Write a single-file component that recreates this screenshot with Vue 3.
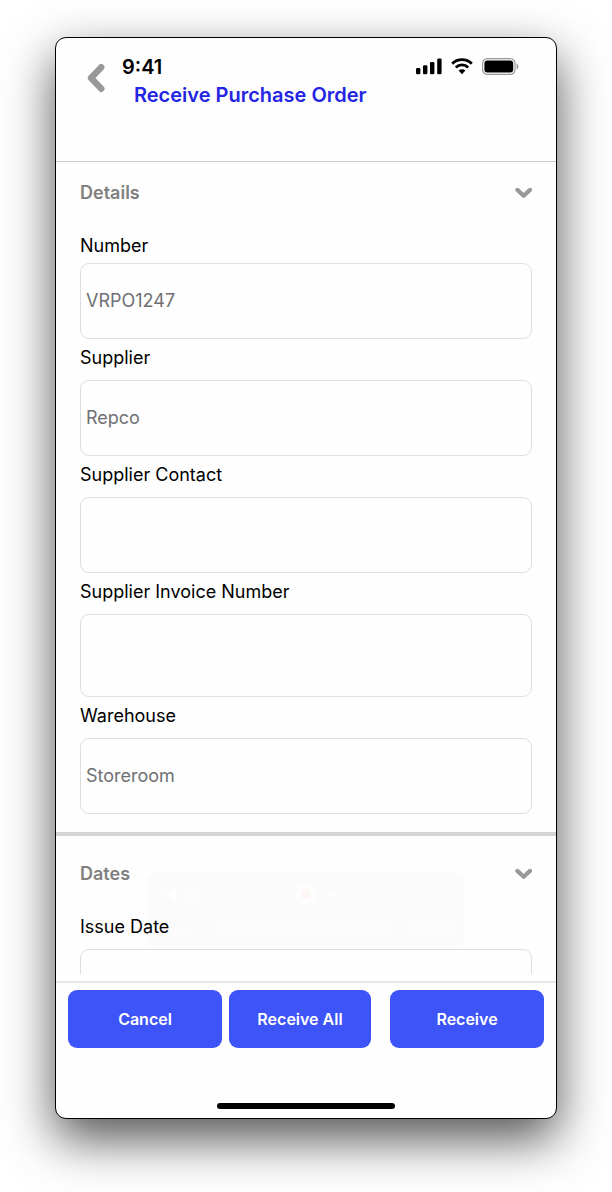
<script setup>
import { ref } from 'vue'

const details = ref([
  { id: 'number', label: 'Number', value: 'VRPO1247' },
  { id: 'supplier', label: 'Supplier', value: 'Repco' },
  { id: 'contact', label: 'Supplier Contact', value: '' },
  { id: 'invoice', label: 'Supplier Invoice Number', value: '', tall: true },
  { id: 'warehouse', label: 'Warehouse', value: 'Storeroom' }
])
const issueDate = ref('')

const showDetails = ref(true)
const showDates = ref(true)
</script>

<template>
  <div class="phone">
    <header class="header">
      <button class="back" type="button" aria-label="Back">
        <svg width="18" height="30" viewBox="0 0 18 30">
          <path d="M14.3 4.2 4 15l10.3 10.8" />
        </svg>
      </button>
      <div class="header-main">
        <div class="status">
          <span class="time">9:41</span>
          <svg class="signal" width="26" height="18" viewBox="0 0 26 18">
            <rect x="0" y="10" width="4.4" height="6.3" rx="1.3" />
            <rect x="7" y="7.2" width="4.4" height="9.1" rx="1.3" />
            <rect x="14" y="4" width="4.4" height="12.3" rx="1.3" />
            <rect x="21.2" y="0.4" width="4.4" height="15.9" rx="1.3" />
          </svg>
          <svg class="wifi" width="22" height="18" viewBox="0 0 22 18">
            <path class="arc" d="M1.2 5.7a13.9 13.9 0 0 1 19.6 0" />
            <path class="arc" d="M4.8 9.4a8.8 8.8 0 0 1 12.4 0" />
            <path d="M7.6 12.6a4.9 4.9 0 0 1 6.8 0L11 16.2z" />
          </svg>
          <svg class="battery" width="37" height="18" viewBox="0 0 37 18">
            <rect class="shell" x="0.6" y="0.6" width="32.4" height="15.8" rx="4.8" />
            <rect x="2.4" y="2.5" width="28.8" height="12" rx="3" />
            <path class="cap" d="M34.6 5.7c2.4.8 2.4 4.8 0 5.6z" />
          </svg>
        </div>
        <h1 class="title">Receive Purchase Order</h1>
      </div>
    </header>

    <main class="content">
      <section class="details">
        <h2>
          <button class="section-toggle" type="button" @click="showDetails = !showDetails">
            Details
            <svg width="18" height="12" viewBox="0 0 18 12">
              <path d="M3.4 2.9 9.7 8.8 16 2.9" />
            </svg>
          </button>
        </h2>
        <div v-show="showDetails" class="fields">
          <div v-for="field in details" :key="field.id" class="field">
            <label :for="field.id">{{ field.label }}</label>
            <input :id="field.id" v-model="field.value" type="text" :class="{ tall: field.tall }" />
          </div>
        </div>
      </section>

      <section class="dates">
        <div class="recorder" aria-hidden="true">
          <div class="recorder-top">
            <svg width="46" height="20" viewBox="0 0 46 20">
              <path d="M6 8h4l6-5v14l-6-5H6z" />
              <circle class="dim" cx="32" cy="10" r="8" />
            </svg>
            <svg class="record" width="20" height="20" viewBox="0 0 20 20">
              <circle cx="10" cy="10" r="10" />
              <circle class="dot" cx="10" cy="10" r="5" />
            </svg>
            <svg width="10" height="20" viewBox="0 0 10 20">
              <path class="line" d="m2 9 3 3 3-3" />
            </svg>
          </div>
          <div class="recorder-bottom">
            <span>-:--</span>
            <span class="ticks"></span>
            <span>Zero KB</span>
          </div>
        </div>
        <h2>
          <button class="section-toggle" type="button" @click="showDates = !showDates">
            Dates
            <svg width="18" height="12" viewBox="0 0 18 12">
              <path d="M3.4 2.9 9.7 8.8 16 2.9" />
            </svg>
          </button>
        </h2>
        <div v-show="showDates" class="fields">
          <div class="field">
            <label for="issue-date">Issue Date</label>
            <input id="issue-date" v-model="issueDate" type="text" />
          </div>
        </div>
      </section>
    </main>

    <footer class="footer">
      <div class="actions">
        <button class="action" type="button">Cancel</button>
        <button class="action receive-all" type="button">Receive All</button>
        <button class="action" type="button">Receive</button>
      </div>
      <div class="home-bar"></div>
    </footer>
  </div>
</template>

<style>
body {
  background: #fff;
}

#app {
  display: flow-root;
}
</style>

<style scoped>
.phone {
  box-sizing: border-box;
  display: flex;
  flex-direction: column;
  height: calc(100vh - 110px);
  margin: 37px 55px 73px;
  overflow: hidden;
  border: 1px solid #000;
  border-radius: 11px;
  background: #fefefe;
  box-shadow: 0 20px 50px rgba(0, 0, 0, 0.68);
  color: #000;
  font-family: Inter, 'Liberation Sans', sans-serif;
  font-size: 18px;
  line-height: 24px;
}

button {
  padding: 0;
  border: 0;
  background: none;
  font-family: inherit;
  cursor: pointer;
}

svg {
  display: block;
  flex: none;
}

.header {
  box-sizing: border-box;
  display: flex;
  align-items: flex-start;
  flex: none;
  gap: 17px;
  height: 124px;
  padding: 17px 37px 0 31px;
  border-bottom: 1px solid #ccc;
}

.back {
  margin-top: 8px;
}

.back path {
  fill: none;
  stroke: #999;
  stroke-width: 6.4;
  stroke-linecap: round;
  stroke-linejoin: round;
}

.header-main {
  flex: 1;
}

.status {
  display: flex;
  align-items: center;
}

.time {
  margin-right: auto;
  font-size: 20px;
  font-weight: 600;
}

.wifi {
  margin: 0 9px;
}

.arc {
  fill: none;
  stroke: #000;
  stroke-width: 2.8;
}

.shell {
  fill: none;
  stroke: #999;
  stroke-width: 1.2;
}

.cap {
  fill: #999;
}

.title {
  margin: 4px 0 0 12px;
  color: #2424e4;
  font-size: 20px;
  font-weight: 600;
}

.content {
  flex: 1;
  min-height: 0;
  overflow-y: auto;
  scrollbar-width: none;
}

.details {
  padding: 19px 24px 18px;
}

.dates {
  position: relative;
  padding: 26px 24px 18px;
  border-top: 4px solid #d4d4d4;
}

h2 {
  position: relative;
  margin: 0 0 29px;
  font-size: 18px;
}

.section-toggle {
  display: flex;
  align-items: center;
  justify-content: space-between;
  width: 100%;
  color: #808080;
  font-size: 18px;
  font-weight: 600;
  line-height: 24px;
}

.section-toggle path {
  fill: none;
  stroke: #999;
  stroke-width: 4.2;
  stroke-linecap: round;
  stroke-linejoin: round;
}

.fields {
  position: relative;
  display: flex;
  flex-direction: column;
  gap: 7px;
}

.field {
  display: flex;
  flex-direction: column;
  gap: 10px;
}

.details .field:first-child {
  gap: 5px;
}

.field input {
  box-sizing: border-box;
  width: 100%;
  height: 76px;
  padding: 0 5px 2px;
  border: 1px solid #dedede;
  border-radius: 9px;
  background: transparent;
  color: #707074;
  font-family: inherit;
  font-size: 18px;
}

.field input.tall {
  height: 83px;
}

/* faint capture panel that sits behind the dates */
.recorder {
  position: absolute;
  top: 36px;
  left: 50%;
  box-sizing: border-box;
  width: 318px;
  height: 75px;
  padding: 12px 13px;
  transform: translateX(-50%);
  border-radius: 10px;
  background: #fbfbfb;
  color: #fefefe;
  font-size: 12px;
  font-weight: 500;
  line-height: 16px;
}

.recorder-top {
  display: grid;
  grid-template-columns: 1fr 20px 1fr;
  gap: 13px;
}

.recorder svg {
  fill: #fefefe;
}

.recorder .dim {
  fill: #fcfcfc;
}

.recorder .dot {
  fill: #fff6f6;
}

.recorder .line {
  fill: none;
  stroke: #fefefe;
  stroke-width: 2;
}

.recorder-bottom {
  display: flex;
  align-items: center;
  gap: 10px;
  margin-top: 17px;
  padding-left: 12px;
}

.ticks {
  flex: 1;
  height: 10px;
  margin-left: 10px;
  background: repeating-linear-gradient(90deg, #fcfcfc 0 2px, #fbfbfb 2px 4px);
}

.footer {
  flex: none;
  margin-top: 7px;
  padding: 7px 12px 9px;
  border-top: 2px solid #e6e6e6;
}

.actions {
  display: flex;
}

.action {
  flex: 154;
  height: 58px;
  border-radius: 9px;
  background: #3c54f8;
  color: #fff;
  font-size: 16px;
  font-weight: 600;
}

.receive-all {
  flex: 142;
  margin: 0 19px 0 7px;
}

.home-bar {
  width: 178px;
  height: 6px;
  margin: 55px auto 0;
  border-radius: 3px;
  background: #000;
}
</style>
